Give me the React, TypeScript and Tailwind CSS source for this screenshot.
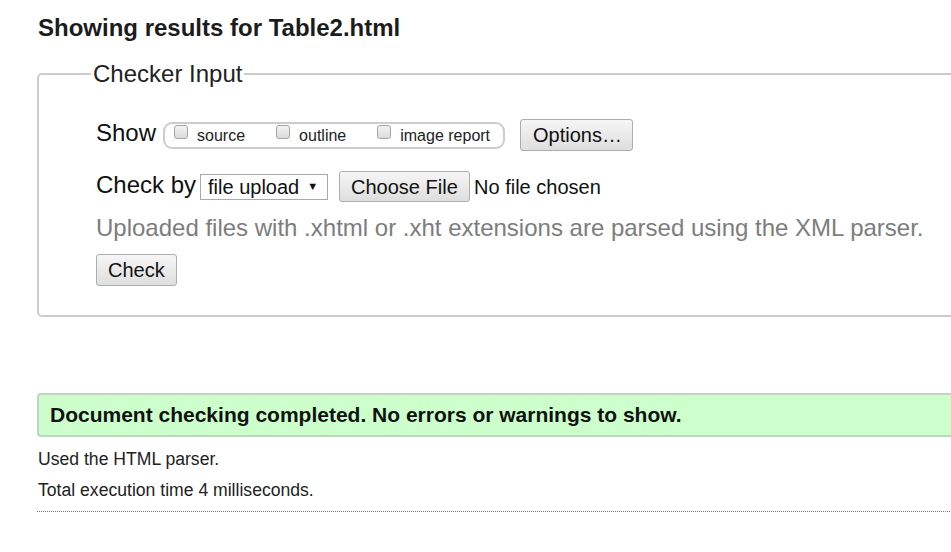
import React from 'react';

const btn =
  'flex items-center rounded-[3px] border border-[#adadad] bg-linear-to-b from-[#f6f6f6] to-[#dedede] text-[20px] leading-[24px] text-[#111]';

const Box: React.FC = () => (
  <span className="mt-[1px] h-[14px] w-[14px] shrink-0 self-start rounded-[3px] border border-[#a5a5a5] bg-linear-to-b from-[#f2f2f2] to-[#dcdcdc]" />
);

export default function App() {
  return (
    <div
      className="min-h-[552px] w-full overflow-hidden bg-white text-[#111]"
      style={{ fontFamily: '"Liberation Sans", Arial, sans-serif' }}
    >
      <div className="w-[1000px] pl-[37px]">
        <h2 className="pt-[14px] pl-[1px] text-[24px] font-bold leading-[28px] text-[#1c1c1c]">
          Showing results for Table2.html
        </h2>

        {/* Checker form */}
        <fieldset className="mt-[18px] rounded-[5px] border-2 border-[#cccccc] pt-[31px] pb-[29px] pl-[57px]">
          <legend className="-ml-[5px] px-[2px] text-[24px] leading-[28px] text-[#222]">Checker Input</legend>

          <div className="flex h-[32px] items-center">
            <span className="mb-[4px] text-[24px] leading-[28px]">Show</span>
            <div className="ml-[7px] flex h-[27px] items-stretch rounded-[9px] border-2 border-[#cccccc] pr-[13px] pl-[9px] text-[16px] text-[#222]">
              <label className="flex items-end pb-[2px]">
                <Box />
                <span className="ml-[9px] leading-[18px]">source</span>
              </label>
              <label className="ml-[31px] flex items-end pb-[2px]">
                <Box />
                <span className="ml-[9px] leading-[18px]">outline</span>
              </label>
              <label className="ml-[31px] flex items-end pb-[2px]">
                <Box />
                <span className="ml-[9px] leading-[18px]">image report</span>
              </label>
            </div>
            <button className={`${btn} ml-[15px] h-[32px] w-[113px] pl-[12px]`}>Options…</button>
          </div>

          <div className="mt-[20px] flex h-[31px] items-center">
            <span className="mb-[4px] text-[24px] leading-[28px]">Check by</span>
            <span className="ml-[4px] flex h-[26px] w-[128px] items-center border border-[#a9a9a9] bg-white pl-[7px] text-[20px] leading-[24px]">
              file upload
              <span className="ml-[8px] text-[11px] leading-none">▼</span>
            </span>
            <button className={`${btn} ml-[11px] h-[31px] w-[131px] pl-[11px]`}>Choose File</button>
            <span className="ml-[4px] text-[20px] leading-[24px]">No file chosen</span>
          </div>

          <p className="mt-[12px] text-[24px] leading-[28px] text-[#7d7d7d]">
            Uploaded files with .xhtml or .xht extensions are parsed using the XML parser.
          </p>

          <button className={`${btn} mt-[12px] h-[32px] w-[81px] pl-[11px]`}>Check</button>
        </fieldset>

        {/* Result */}
        <div className="mt-[76px] flex h-[44px] items-center rounded-[4px] border-2 border-[#c3d3c3] bg-[#ccffcc] pl-[11px] text-[21px] font-bold leading-[24px]">
          Document checking completed. No errors or warnings to show.
        </div>
        <p className="mt-[12px] pl-[1px] text-[17.6px] leading-[20px] text-[#222]">Used the HTML parser.</p>
        <p className="mt-[11px] pl-[1px] text-[17.6px] leading-[20px] text-[#222]">Total execution time 4 milliseconds.</p>
        <div className="mt-[11px] border-b border-dotted border-[#777]" />
      </div>
    </div>
  );
}
